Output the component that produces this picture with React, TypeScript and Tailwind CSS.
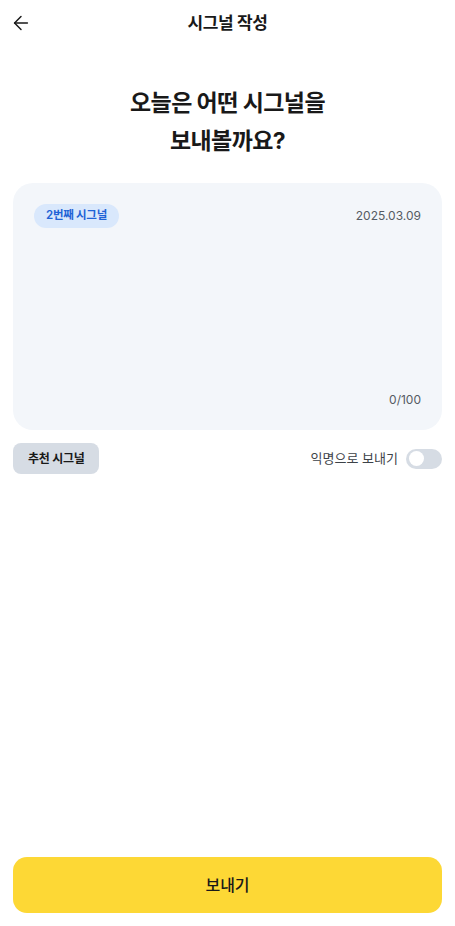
import React, { useState } from 'react';
import { ArrowLeft } from 'lucide-react';

const font = { fontFamily: 'Inter, "Noto Sans CJK KR", "Noto Sans", sans-serif' };

const App: React.FC = () => {
  const [text, setText] = useState('');
  const [anonymous, setAnonymous] = useState(false);

  return (
    <div className="flex h-[926px] flex-col bg-white text-[#191919]" style={font}>
      <header className="relative flex h-11 items-center justify-center">
        <button className="absolute left-[10px] top-[12px] text-[#191919]">
          <ArrowLeft size={22} strokeWidth={1.6} />
        </button>
        <h1 className="pt-1 text-[17px] font-semibold tracking-tight">시그널 작성</h1>
      </header>

      <h2 className="mt-10 text-center text-[23px] font-bold leading-[38px] tracking-tight">
        오늘은 어떤 시그널을
        <br />
        보내볼까요?
      </h2>

      <div className="mx-[13px] mt-[23px] flex h-[247px] flex-col rounded-[20px] bg-[#f3f6fa] px-[21px] pb-[21px] pt-[21px]">
        <div className="flex items-center justify-between">
          <span className="flex h-6 items-center rounded-full bg-[#d9e8fc] px-3 text-[11.5px] font-semibold tracking-tight text-[#1f63d6]">
            2번째 시그널
          </span>
          <span className="text-[12px] text-[#555b63]">2025.03.09</span>
        </div>
        <textarea
          value={text}
          maxLength={100}
          onChange={(e) => setText(e.target.value)}
          className="mt-2 flex-1 resize-none bg-transparent text-[14px] outline-none"
        />
        <div className="text-right text-[12px] text-[#555b63]">{text.length}/100</div>
      </div>

      <div className="mx-[13px] mt-[13px] flex items-center justify-between">
        <button className="h-[31px] rounded-lg bg-[#d6dce4] px-[15px] text-[12px] font-semibold tracking-tight text-[#191919]">
          추천 시그널
        </button>
        <label className="flex items-center gap-2">
          <span className="text-[13px] text-[#3d4248]">익명으로 보내기</span>
          <button
            onClick={() => setAnonymous(!anonymous)}
            className={`flex h-5 w-9 items-center rounded-full px-[3px] ${anonymous ? 'justify-end bg-[#fdd835]' : 'justify-start bg-[#d6dce4]'}`}
          >
            <span className="h-[15px] w-[15px] rounded-full bg-white" />
          </button>
        </label>
      </div>

      <div className="mt-auto px-[13px] pb-[13px]">
        <button className="flex h-14 w-full items-center justify-center rounded-[14px] bg-[#fdd835] text-[16px] font-medium text-[#191919]">
          보내기
        </button>
      </div>
    </div>
  );
};

export default App;
